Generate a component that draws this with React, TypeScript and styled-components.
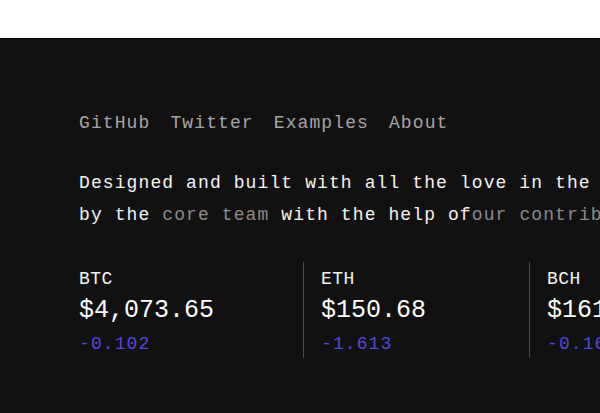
import React from 'react';
import styled, { createGlobalStyle } from 'styled-components';

const GlobalStyle = createGlobalStyle`
  html, body {
    margin: 0;
    padding: 0;
    background: #ffffff;
    overflow: hidden;
  }
  * {
    box-sizing: border-box;
  }
`;

const MONO = `"Liberation Mono", "DejaVu Sans Mono", monospace`;

const links = ['GitHub', 'Twitter', 'Examples', 'About'];

const coins = [
  { symbol: 'BTC', price: '$4,073.65', change: '-0.102' },
  { symbol: 'ETH', price: '$150.68', change: '-1.613' },
  { symbol: 'BCH', price: '$161.42', change: '-0.166' },
];

const App = () => {
  return (
    <Page>
      <GlobalStyle />
      <TopBar />
      <Footer>
        <Nav>
          {links.map(link => (
            <NavLink key={link} href="#">
              {link}
            </NavLink>
          ))}
        </Nav>

        <Credits>
          Designed and built with all the love in the world
          <br />
          by the <MutedLink href="#">core team</MutedLink> with the help of
          <MutedLink href="#">our contributors</MutedLink>.
        </Credits>

        <Tickers>
          {coins.map((coin, i) => (
            <Ticker key={coin.symbol} first={i === 0}>
              <Symbol>{coin.symbol}</Symbol>
              <Price>{coin.price}</Price>
              <Change>{coin.change}</Change>
            </Ticker>
          ))}
        </Tickers>
      </Footer>
    </Page>
  );
};

const Page = styled.div`
  display: flex;
  flex-direction: column;
  min-height: 413px;
  width: 100%;
`;

const TopBar = styled.header`
  height: 38px;
  background: #ffffff;
`;

const Footer = styled.footer`
  flex: 1;
  background: #111111;
  border-top: 1px solid #000000;
  padding: 72px 0 0 79px;
  font-family: ${MONO};
  white-space: nowrap;
`;

const Nav = styled.nav`
  display: flex;
  gap: 20px;
  height: 24px;
  align-items: center;
`;

const NavLink = styled.a`
  font-size: 18px;
  line-height: 24px;
  letter-spacing: 1.1px;
  color: #a6a6a6;
  text-decoration: none;
`;

const Credits = styled.p`
  margin: 32px 0 0;
  font-size: 18px;
  line-height: 32px;
  letter-spacing: 1.1px;
  color: #f4f4f4;
`;

const MutedLink = styled.a`
  color: #8c8c8c;
  text-decoration: none;
`;

const Tickers = styled.div`
  display: grid;
  grid-template-columns: 224px 226px 226px;
  margin-top: 31px;
`;

const Ticker = styled.div<{ first: boolean }>`
  display: flex;
  flex-direction: column;
  height: 96px;
  padding: 5px 0 0 ${p => (p.first ? '0' : '17px')};
  border-left: ${p => (p.first ? 'none' : '1px solid #4a4a4a')};
`;

const Symbol = styled.div`
  font-size: 18px;
  line-height: 24px;
  letter-spacing: 0.5px;
  color: #f4f4f4;
`;

const Price = styled.div`
  margin-top: 4px;
  font-size: 25px;
  line-height: 32px;
  color: #ffffff;
`;

const Change = styled.div`
  margin-top: 5px;
  font-size: 18px;
  line-height: 24px;
  letter-spacing: 1.1px;
  color: #5448d8;
`;

export default App;
